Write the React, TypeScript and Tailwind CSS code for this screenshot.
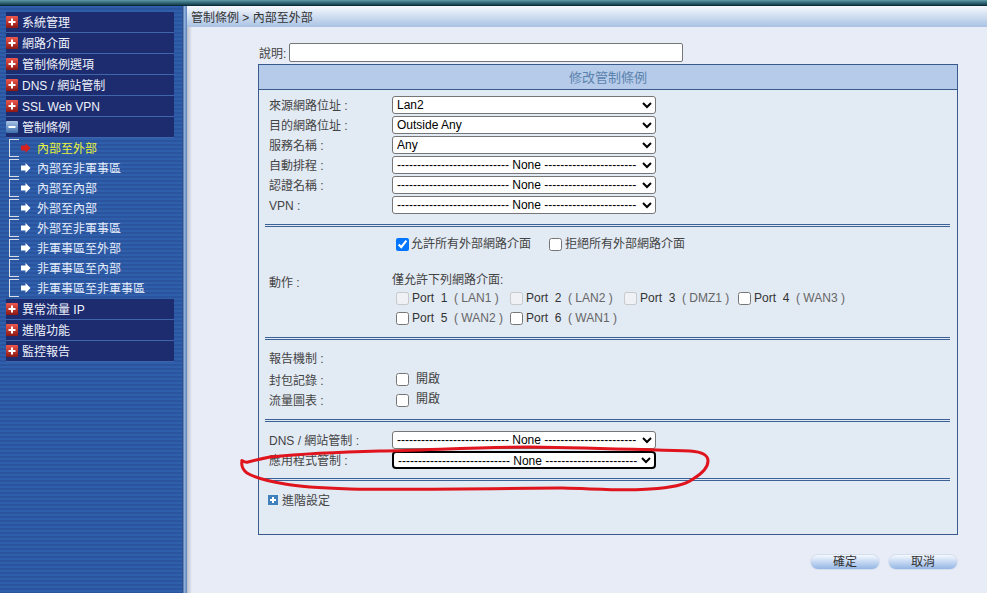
import React from 'react';

const topMenu = ['系統管理', '網路介面', '管制條例選項', 'DNS / 網站管制', 'SSL Web VPN'];
const subMenu = ['內部至外部', '內部至非軍事區', '內部至內部', '外部至內部', '外部至非軍事區', '非軍事區至外部', '非軍事區至內部', '非軍事區至非軍事區'];
const bottomMenu = ['異常流量 IP', '進階功能', '監控報告'];

const NONE = '---------------------------- None -----------------------';

function PlusIcon({ minus = false }: { minus?: boolean }) {
  const id = minus ? 'iconBlue' : 'iconRed';
  return (
    <svg width="12" height="12" viewBox="0 0 12 12" className="shrink-0">
      <defs>
        <linearGradient id={id} x1="0" y1="0" x2="0" y2="1">
          <stop offset="0" stopColor={minus ? '#a9c4e6' : '#f0584c'} />
          <stop offset="1" stopColor={minus ? '#3d6fae' : '#8c1712'} />
        </linearGradient>
      </defs>
      <rect width="12" height="12" rx="1" fill={`url(#${id})`} />
      <rect x="2.5" y="5" width="7" height="2" fill="#fff" />
      {!minus && <rect x="5" y="2.5" width="2" height="7" fill="#fff" />}
    </svg>
  );
}

function MenuRow({ label, minus = false }: { label: string; minus?: boolean }) {
  return (
    <div className="h-[21px] flex items-center gap-[4px] bg-[#1d2c6e] border-b border-[#3f66ad] text-[12px] text-[#eef2fb]">
      <PlusIcon minus={minus} />
      <span className="pt-[2px]">{label}</span>
    </div>
  );
}

function SubRow({ label, active = false }: { label: string; active?: boolean }) {
  return (
    <div className="h-[20px] flex items-center text-[12px]">
      <div className="w-[10px] h-[18px] ml-[3px] border-l border-y border-[#d8dde6]" />
      <svg width="11" height="10" viewBox="0 0 11 10" className="ml-[1px] shrink-0">
        <path d="M1 2.5H5.5V0L10.5 5L5.5 10V7.5H1Z" fill={active ? '#d8201c' : '#ffffff'} />
      </svg>
      <span className={`ml-[6px] pt-[2px] ${active ? 'text-[#e8f23c]' : 'text-[#e4ecfa]'}`}>{label}</span>
    </div>
  );
}

function Sidebar() {
  return (
    <aside className="w-[182px] shrink-0 pt-[6px] px-[6px] bg-[#2e5ca8] bg-[repeating-linear-gradient(180deg,#2f5eaa_0px,#2f5eaa_2px,#2a559e_2px,#2a559e_4px)]">
      <div className="w-[168px]">
        {topMenu.map(m => <MenuRow key={m} label={m} />)}
        <MenuRow label="管制條例" minus />
        <div>
          {subMenu.map((m, i) => <SubRow key={m} label={m} active={i === 0} />)}
        </div>
        <div className="mt-[1px]">
          {bottomMenu.map(m => <MenuRow key={m} label={m} />)}
        </div>
      </div>
    </aside>
  );
}

function Select({ value, focused = false }: { value: string; focused?: boolean }) {
  return (
    <select
      defaultValue={value}
      className={`w-[264px] h-[18px] bg-white text-[12px] text-black ${
        focused ? 'rounded-[4px] border-2 border-black' : 'rounded-[3px] border border-[#767676]'
      }`}
    >
      <option value={value}>{value}</option>
    </select>
  );
}

function FieldRow({ label, value, focused }: { label: string; value: string; focused?: boolean }) {
  return (
    <div className="h-[20px] flex items-center">
      <span className="w-[123px] shrink-0 pt-[2px] text-[12px] text-[#444]">{label}</span>
      <Select value={value} focused={focused} />
    </div>
  );
}

function Separator() {
  return <div className="h-[3px] mr-[1px] -ml-[4px] border-y border-[#3a6296] bg-[#dfe8f3]" />;
}

function Port({ name, link, disabled = false }: { name: string; link: string; disabled?: boolean }) {
  return (
    <label className="w-[114px] flex items-center gap-[3px] whitespace-pre text-[12px]">
      <input type="checkbox" disabled={disabled} className="w-[13px] h-[13px] m-0" />
      <span className="text-[#333]">
        {name}
        <span className="text-[#666]">{link}</span>
      </span>
    </label>
  );
}

function Panel() {
  return (
    <div className="w-[700px] h-[471px] border border-[#3a5a8c] bg-[#e2eaf4]">
      <div className="h-[25px] pt-[2px] flex items-center justify-center bg-[#b6cbe9] border-b border-[#3a5a8c] text-[13px] text-[#5b82ad]">
        修改管制條例
      </div>
      <div className="pl-[10px] pr-[6px]">
        <div className="pt-[5px] pb-[9px]">
          <FieldRow label="來源網路位址 :" value="Lan2" />
          <FieldRow label="目的網路位址 :" value="Outside Any" />
          <FieldRow label="服務名稱 :" value="Any" />
          <FieldRow label="自動排程 :" value={NONE} />
          <FieldRow label="認證名稱 :" value={NONE} />
          <FieldRow label="VPN :" value={NONE} />
        </div>
        <Separator />

        <div className="h-[110px] flex items-center">
          <span className="w-[123px] shrink-0 text-[12px] text-[#444] pt-[1px]">動作 :</span>
          <div className="self-start pt-[7px] text-[12px] text-[#444]">
            <div className="flex items-center h-[20px] pl-[4px] mb-[16px]">
              <input type="checkbox" defaultChecked className="w-[13px] h-[13px] m-0" />
              <span className="ml-[2px] w-[138px]">允許所有外部網路介面</span>
              <input type="checkbox" className="w-[13px] h-[13px] m-0" />
              <span className="ml-[3px]">拒絕所有外部網路介面</span>
            </div>
            <div className="h-[18px] pt-[2px] flex items-center">僅允許下列網路介面:</div>
            <div className="h-[20px] flex items-center pl-[4px]">
              <Port name="Port  1" link="  ( LAN1 )" disabled />
              <Port name="Port  2" link="  ( LAN2 )" disabled />
              <Port name="Port  3" link="  ( DMZ1 )" disabled />
              <Port name="Port  4" link="  ( WAN3 )" />
            </div>
            <div className="h-[20px] flex items-center pl-[4px]">
              <Port name="Port  5" link="  ( WAN2 )" />
              <Port name="Port  6" link="  ( WAN1 )" />
            </div>
          </div>
        </div>
        <Separator />

        <div className="h-[79px] pt-[8px] text-[12px] text-[#444]">
          <div className="h-[21px] flex items-center">報告機制 :</div>
          <div className="h-[21px] flex items-center">
            <span className="w-[127px] shrink-0 pt-[2px]">封包記錄 :</span>
            <input type="checkbox" className="w-[13px] h-[13px] m-0" />
            <span className="ml-[7px] -mt-[2px]">開啟</span>
          </div>
          <div className="h-[20px] flex items-center">
            <span className="w-[127px] shrink-0 pt-[2px]">流量圖表 :</span>
            <input type="checkbox" className="w-[13px] h-[13px] m-0" />
            <span className="ml-[7px] -mt-[2px]">開啟</span>
          </div>
        </div>
        <Separator />

        <div className="pt-[8px] pb-[8px]">
          <FieldRow label="DNS / 網站管制 :" value={NONE} />
          <FieldRow label="應用程式管制 :" value={NONE} focused />
        </div>
        <Separator />

        <div className="mt-[9px] flex items-center gap-[4px] text-[12px] text-[#444]">
          <svg width="10" height="10" viewBox="0 0 10 10" className="shrink-0 -ml-[1px]">
            <rect width="10" height="10" fill="#3f80bd" />
            <rect x="2" y="4" width="6" height="2" fill="#fff" />
            <rect x="4" y="2" width="2" height="6" fill="#fff" />
          </svg>
          <span className="pt-[2px]">進階設定</span>
        </div>
      </div>
    </div>
  );
}

function PillButton({ label }: { label: string }) {
  return (
    <button className="w-[70px] h-[16px] rounded-full border border-[#d5deec] bg-gradient-to-b from-[#f6f9fe] to-[#94b6e4] text-[12px] leading-none text-[#333]">
      {label}
    </button>
  );
}

export default function App() {
  return (
    <div className="relative w-[987px] h-[593px] overflow-hidden flex flex-col bg-[#e8ecf6] font-['Liberation_Sans','Noto_Sans_CJK_TC',sans-serif]">
      <div className="h-[6px] shrink-0 bg-gradient-to-b from-[#5f9aa8] to-[#12404f] border-b border-[#0c2b38]" />
      <div className="flex-1 flex min-h-0">
        <Sidebar />
        <div className="w-[5px] shrink-0 bg-gradient-to-r from-[#1f3f7a] via-[#8fb0dc] to-[#5c7fb8]" />
        <main className="flex-1 min-w-0 flex flex-col">
          <div className="h-[21px] shrink-0 flex items-center pl-[4px] pt-[2px] bg-gradient-to-b from-[#f6f9fd] to-[#a9c2e3] text-[12px] text-[#333]">
            管制條例 &gt; 內部至外部
          </div>
          <div className="flex-1 pl-[71px] pt-[16px] bg-[linear-gradient(90deg,#b9bec8_0px,#e8ecf6_5px)]">
            <div className="h-[19px] flex items-center">
              <span className="w-[31px] text-[12px] text-[#444] pl-[1px] pt-[2px]">說明:</span>
              <input className="w-[394px] h-[19px] rounded-[2px] border border-[#767676] bg-white" />
            </div>
            <div className="mt-[2px]">
              <Panel />
            </div>
            <div className="w-[700px] mt-[19px] flex justify-end gap-[8px]">
              <PillButton label="確定" />
              <PillButton label="取消" />
            </div>
          </div>
        </main>
      </div>
      {/* hand drawn annotation on top of the screenshot */}
      <svg className="absolute inset-0 pointer-events-none" width="987" height="593" viewBox="0 0 987 593" fill="none">
        <path
          d="M248 462 C244 463 241 459 242 461 C241 466 243 470 247 473 C255 478 268 481 285 484 C300 487 320 488 350 489 C400 490 480 489 563 488 C600 489 630 491 650 489 C670 488 685 485 693 479 C703 473 708 467 708 461 C708 455 703 452 690 451 C650 450 600 448 530 447 C480 447 430 450 380 451 C340 452 300 454 270 457 C260 459 252 461 248 462"
          stroke="#e0141c"
          strokeWidth="3"
          strokeLinecap="round"
        />
      </svg>
    </div>
  );
}
